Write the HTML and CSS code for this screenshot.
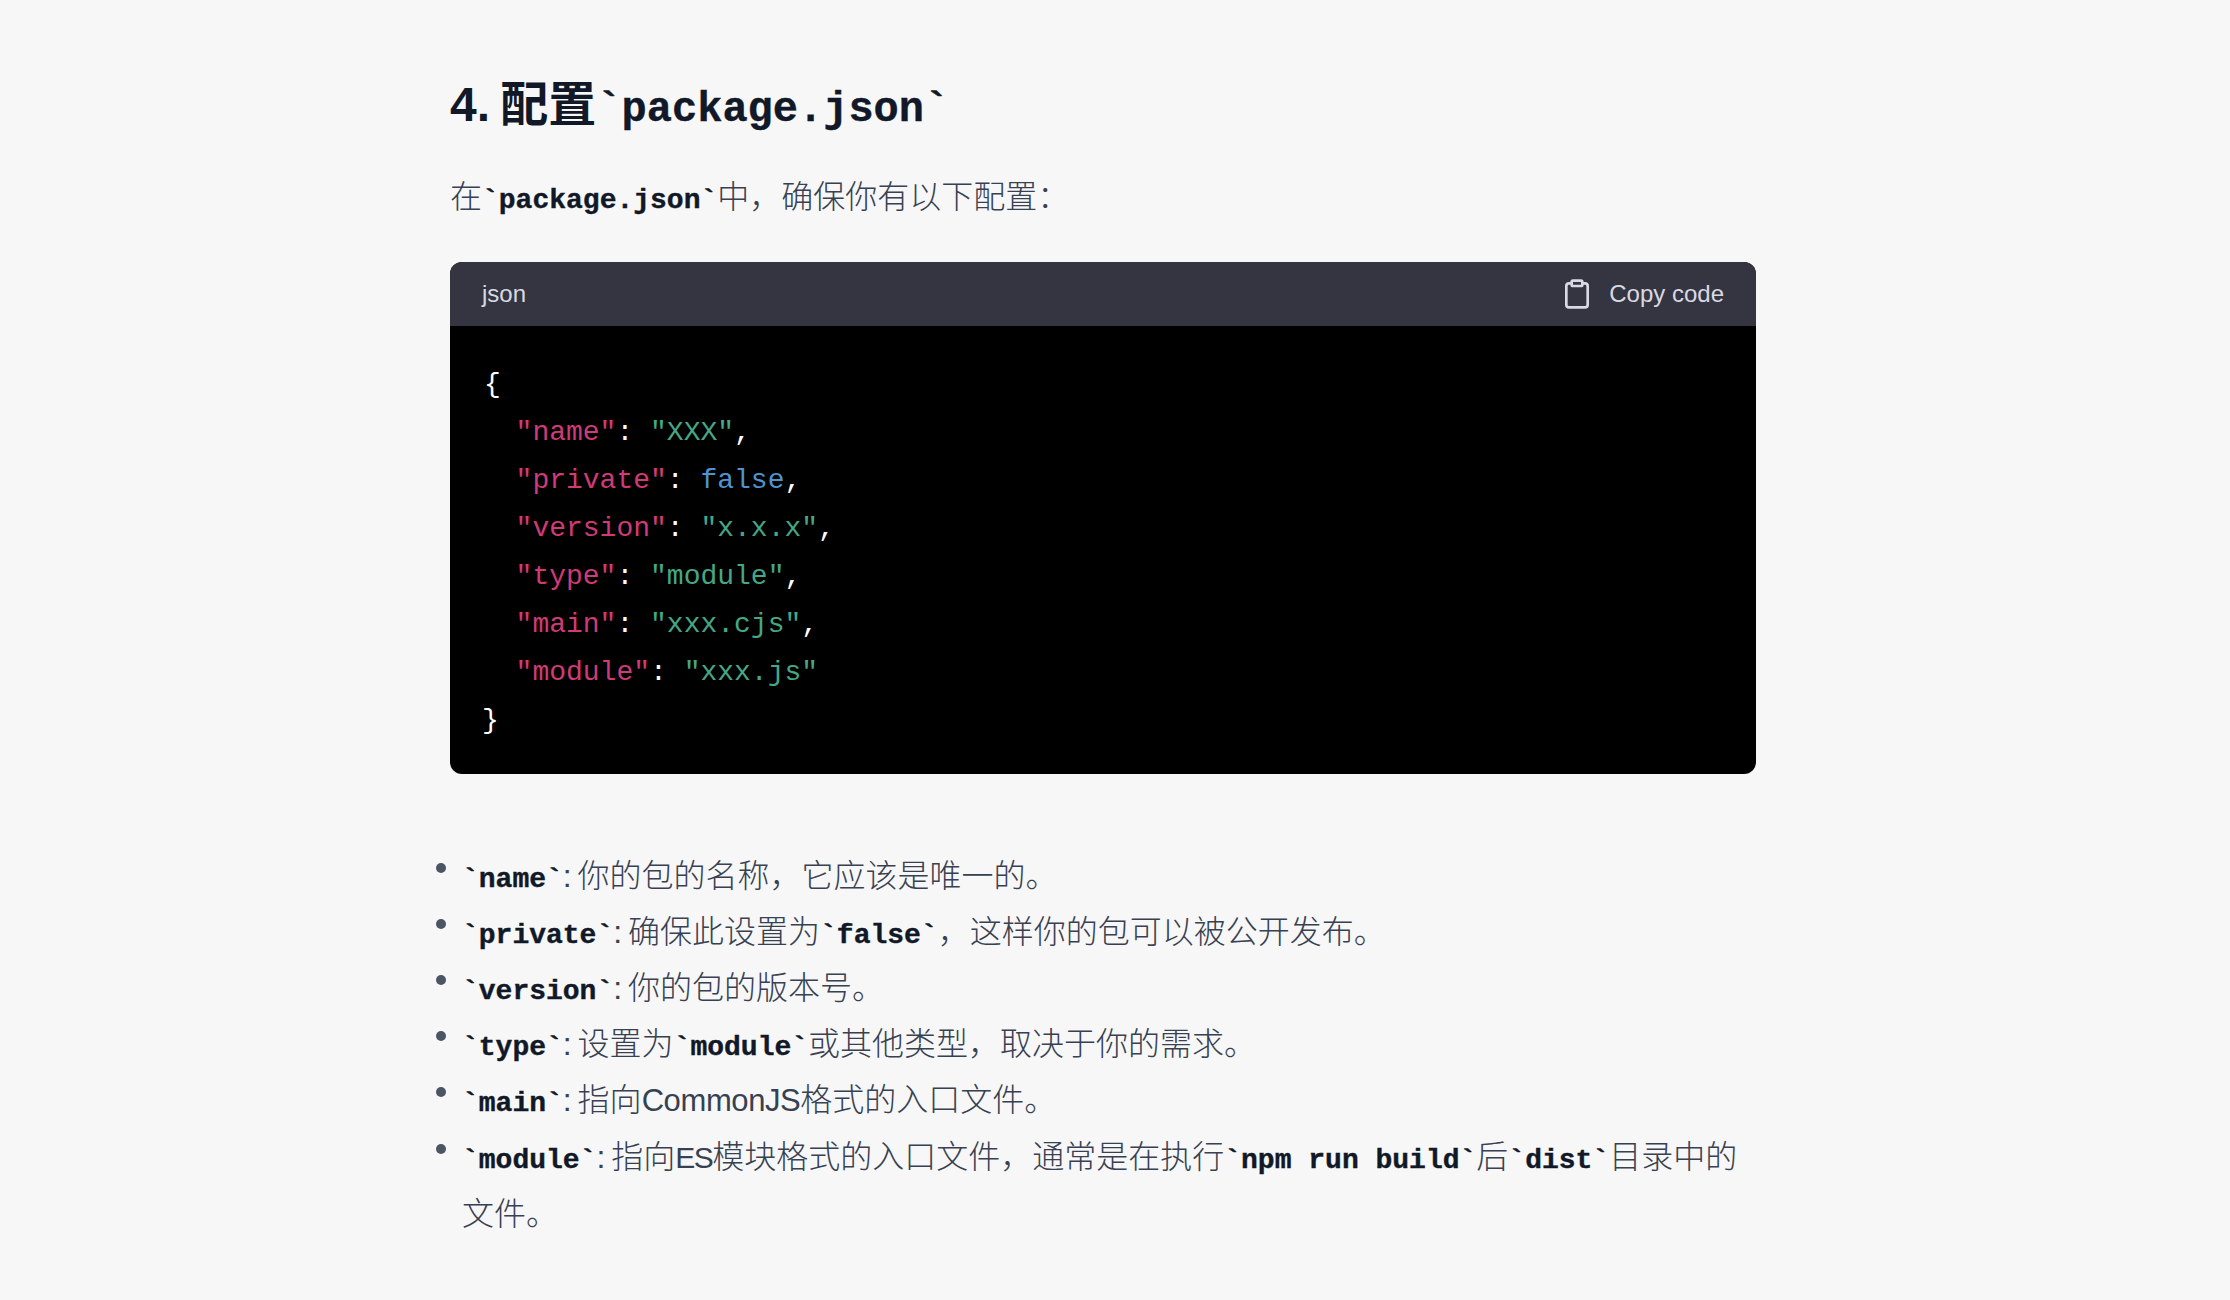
FILE: index.html
```html
<!DOCTYPE html>
<html lang="zh-CN">
<head>
<meta charset="utf-8">
<title>配置 package.json</title>
<link rel="stylesheet" href="styles.css">
</head>
<body>
<main class="prose">
  <h3 class="title">4. 配置<code class="inline">`package.json`</code></h3>
  <p class="lead">在<code class="inline">`package.json`</code>中，确保你有以下配置：</p>
  <div class="codebox">
    <div class="codebar">
      <span>json</span>
      <button class="copy" type="button">
        <svg class="copy-icon" viewBox="0 0 24 24" fill="none" stroke="currentColor" stroke-width="2" stroke-linecap="round" stroke-linejoin="round"><path d="M16 4h2a2 2 0 0 1 2 2v14a2 2 0 0 1-2 2H6a2 2 0 0 1-2-2V6a2 2 0 0 1 2-2h2"/><rect x="8" y="2" width="8" height="4" rx="1" ry="1"/></svg>
        <span>Copy code</span>
      </button>
    </div>
<pre class="code"><span class="open">{</span>
  <span class="k">"name"</span>: <span class="s">"XXX"</span>,
  <span class="k">"private"</span>: <span class="b">false</span>,
  <span class="k">"version"</span>: <span class="s">"x.x.x"</span>,
  <span class="k">"type"</span>: <span class="s">"module"</span>,
  <span class="k">"main"</span>: <span class="s">"xxx.cjs"</span>,
  <span class="k">"module"</span>: <span class="s">"xxx.js"</span>
}</pre>
  </div>
  <ul class="list">
    <li><code class="inline">`name`</code>: 你的包的名称，它应该是唯一的。</li>
    <li><code class="inline">`private`</code>: 确保此设置为<code class="inline">`false`</code>，这样你的包可以被公开发布。</li>
    <li><code class="inline">`version`</code>: 你的包的版本号。</li>
    <li><code class="inline">`type`</code>: 设置为<code class="inline">`module`</code>或其他类型，取决于你的需求。</li>
    <li><code class="inline">`main`</code>: 指向<span class="latin">CommonJS</span>格式的入口文件。</li>
    <li><code class="inline">`module`</code>: 指向<span class="latin-short">ES</span>模块格式的入口文件，通常是在执行<code class="inline">`npm run build`</code>后<code class="inline">`dist`</code>目录中的文件。</li>
  </ul>
</main>
</body>
</html>
```
FILE: styles.css
```css
html, body {
  margin: 0;
  padding: 0;
  background: #f7f7f8;
}
body {
  font-family: "Liberation Sans", "Noto Sans CJK SC", sans-serif;
  font-size: 32px;
  font-weight: 300;
  line-height: 56px;
  word-spacing: -3px;
  color: #374151;
}
.prose {
  width: 1306px;
  margin-left: 450px;
  padding-top: 73px;
}
.title {
  margin: 0;
  font-size: 48px;
  line-height: 64px;
  font-weight: 700;
  color: #111827;
}
.lead {
  margin: 32px 0 0;
}
.inline {
  font-family: "Liberation Mono", monospace;
  font-size: .875em;
  line-height: 1;
  font-weight: 700;
  word-spacing: 0;
  color: #111827;
  -webkit-text-stroke: .4px #111827;
}
.latin {
  font-size: 31px;
  letter-spacing: -.4px;
}
.latin-short {
  font-size: 30px;
  letter-spacing: -1.5px;
}
.codebox {
  margin-top: 37px;
  border-radius: 12px;
  overflow: hidden;
  background: #000;
}
.codebar {
  display: flex;
  justify-content: space-between;
  align-items: center;
  height: 64px;
  padding: 0 32px;
  background: #343541;
  color: #d9d9e3;
  font-size: 24px;
  line-height: 32px;
  word-spacing: 0;
}
.copy {
  display: flex;
  align-items: center;
  gap: 16px;
  margin: 0;
  padding: 0;
  border: 0;
  background: none;
  color: inherit;
  font: inherit;
}
.copy-icon {
  width: 32px;
  height: 32px;
}
.code {
  margin: 0;
  padding: 35px 32px 29px;
  font-family: "Liberation Mono", monospace;
  font-size: 28px;
  line-height: 48px;
  word-spacing: 0;
  color: #fff;
}
.open { margin-left: 2px; }
.k { color: #d03a76; }
.s { color: #45a884; }
.b { color: #4f94d0; }
.list {
  list-style: none;
  margin: 74px 0 0;
  padding: 0 0 0 12px;
}
.list li {
  position: relative;
}
.list li::before {
  content: "";
  position: absolute;
  left: -26px;
  top: 15px;
  width: 10px;
  height: 10px;
  border-radius: 50%;
  background: #4b5563;
}
```
